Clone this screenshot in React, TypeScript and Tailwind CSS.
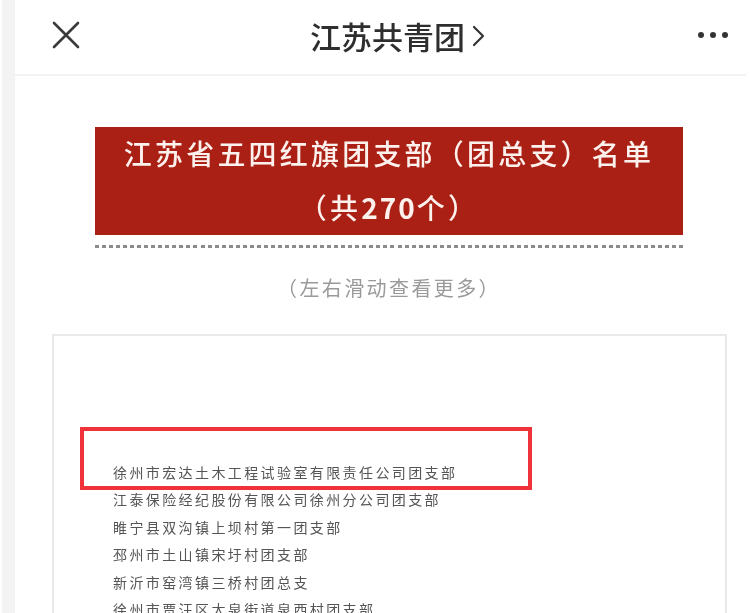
import React from 'react'

const names = [
  '徐州市宏达土木工程试验室有限责任公司团支部',
  '江泰保险经纪股份有限公司徐州分公司团支部',
  '睢宁县双沟镇上坝村第一团支部',
  '邳州市土山镇宋圩村团支部',
  '新沂市窑湾镇三桥村团总支',
  '徐州市贾汪区大泉街道泉西村团支部',
]

const App = () => {
  return (
    <div className="relative flex h-[613px] w-[750px] overflow-hidden bg-white font-['Noto_Sans_CJK_SC','Noto_Sans',sans-serif]">
      <div className="ml-[2px] w-[13px] shrink-0 bg-[#f3f3f3]" />

      <div className="flex min-w-0 flex-1 flex-col">
        <header className="relative mr-[4px] flex h-[76px] shrink-0 items-center justify-center border-b-2 border-[#f2f2f2] pb-[4px] pl-[35px]">
          <svg
            className="absolute left-[37px] top-[21px]"
            width="28"
            height="28"
            viewBox="0 0 28 28"
            fill="none"
            stroke="#3a3a3a"
            strokeWidth="2.6"
            strokeLinecap="round"
          >
            <path d="M2 2 L26 26 M26 2 L2 26" />
          </svg>
          <span className="text-[31px] font-medium leading-none text-[#2e2e2e] blur-[0.4px]">江苏共青团</span>
          <svg
            className="ml-[7px] mt-[1px]"
            width="14"
            height="24"
            viewBox="0 0 14 24"
            fill="none"
            stroke="#333333"
            strokeWidth="2.2"
            strokeLinecap="round"
            strokeLinejoin="round"
          >
            <path d="M2 3 L11 12 L2 21" />
          </svg>
          <div className="absolute right-[18px] top-[32px] flex gap-[6px]">
            <span className="h-[6px] w-[6px] rounded-full bg-[#333333]" />
            <span className="h-[6px] w-[6px] rounded-full bg-[#333333]" />
            <span className="h-[6px] w-[6px] rounded-full bg-[#333333]" />
          </div>
        </header>

        <main className="flex flex-col">
          <section className="ml-[80px] mt-[51px] flex w-[588px] flex-col">
            <div className="flex h-[108px] flex-col items-center justify-center bg-[#ab2014] pb-[2px] text-center text-[28px] font-medium leading-[54px] tracking-[3.2px] text-[#fdf1ee] blur-[0.4px]">
              <div className="whitespace-nowrap">江苏省五四红旗团支部（团总支）名单</div>
              <div className="whitespace-nowrap">
                （共<span className="font-bold tracking-[2px]">270</span>个）
              </div>
            </div>
            <div className="mt-[10px] h-[3px] bg-[repeating-linear-gradient(90deg,#8b8b8b_0_4px,transparent_4px_7.035px)]" />
          </section>

          <p className="ml-[80px] mt-[25px] w-[588px] text-center text-[20px] leading-[30px] tracking-[2.4px] text-[#9a9a9a] blur-[0.4px]">
            （左右滑动查看更多）
          </p>

          <section className="ml-[37px] mr-[23px] mt-[31px] h-[400px] border-2 border-[#e9e9e9] pl-[59px] pt-[123px]">
            <ul className="text-[14px] leading-[27.4px] tracking-[2.4px] text-[#555555] blur-[0.6px]">
              {names.map((name) => (
                <li key={name} className="whitespace-nowrap">
                  {name}
                </li>
              ))}
            </ul>
          </section>
        </main>
      </div>

      <div className="absolute left-[80px] top-[427px] h-[63px] w-[452px] border-[4px] border-[#f0333a]" />
    </div>
  )
}

export default App
